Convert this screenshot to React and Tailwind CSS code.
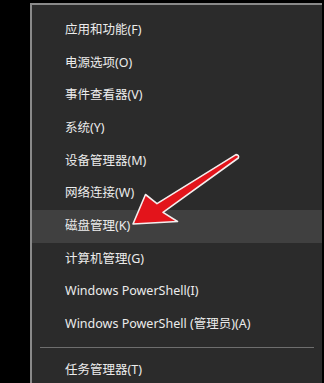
const items = [
  "应用和功能(F)",
  "电源选项(O)",
  "事件查看器(V)",
  "系统(Y)",
  "设备管理器(M)",
  "网络连接(W)",
  "磁盘管理(K)",
  "计算机管理(G)",
  "Windows PowerShell(I)",
  "Windows PowerShell (管理员)(A)",
]

const font = { fontFamily: '"Noto Sans", "Noto Sans CJK SC", sans-serif' }

function Arrow() {
  return (
    <svg className="absolute left-0 top-0 pointer-events-none" width="324" height="383" viewBox="0 0 324 383">
      <path
        d="M133 224 L145.5 194.5 L157 203.6 L236 154.6 Q239.5 155 238.3 158 L163 212.4 L177.5 221.5 Z"
        fill="#e3141b"
        stroke="#f4eeee"
        strokeWidth="1.6"
        strokeLinejoin="round"
      />
    </svg>
  )
}

export default function App() {
  return (
    <div className="relative w-[324px] h-[383px] bg-black overflow-hidden" style={font}>
      <div className="absolute left-[30px] top-[3px] w-[292px] h-[400px] bg-[#2b2b2b] border-l-2 border-t-2 border-[#8a8a8a] pt-[9px]">
        {items.map((t, i) => (
          <div
            key={t}
            className={`h-[32.7px] flex items-center pl-[33px] text-[12.5px] text-[#ececec] ${i === 6 ? "bg-[#404040]" : ""}`}
          >
            {t}
          </div>
        ))}
        <div className="h-[13px] flex items-center px-[8px]">
          <div className="h-px w-full bg-[#6e6e6e]" />
        </div>
        <div className="h-[32px] flex items-center pl-[33px] text-[12.5px] text-[#ececec]">任务管理器(T)</div>
      </div>
      <Arrow />
    </div>
  )
}
